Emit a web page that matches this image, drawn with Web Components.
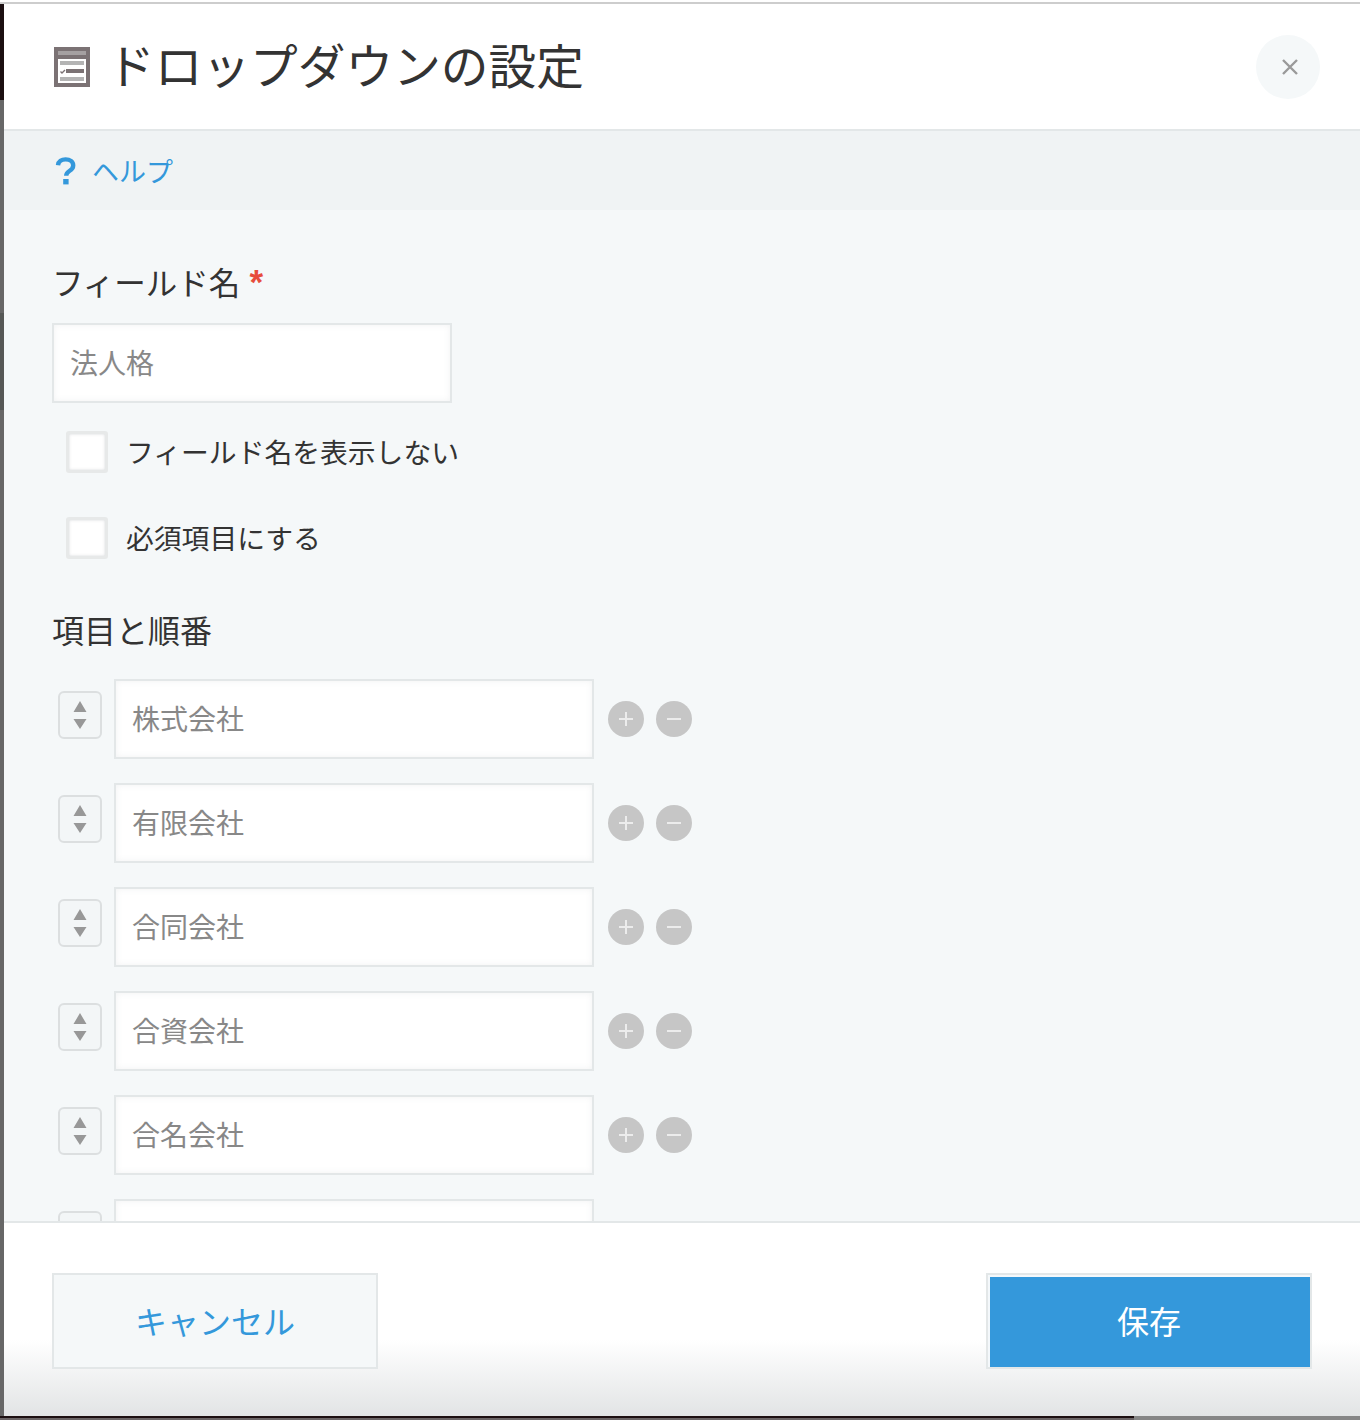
<!doctype html>
<html lang="ja">
<head>
<meta charset="utf-8">
<title>ドロップダウンの設定</title>
<style>
  html, body { margin: 0; height: 100%; background: #fff; }
  body { font-family: "Noto Sans CJK JP", "Liberation Sans", sans-serif; color: #333; overflow: hidden; }
</style>
</head>
<body>
<field-dialog>
  <span slot="title">ドロップダウンの設定</span>
  <span slot="help">ヘルプ</span>

  <field-label required style="--label-size: 31.500px">フィールド名</field-label>
  <text-box style="--box-width: 400px; margin-top: 20px">法人格</text-box>
  <check-row style="margin-top: 28px">フィールド名を表示しない</check-row>
  <check-row style="margin-top: 44px; --check-gap: 18px">必須項目にする</check-row>
  <field-label style="margin-top: 52px">項目と順番</field-label>
  <option-list>
    <option-row>株式会社</option-row>
    <option-row>有限会社</option-row>
    <option-row>合同会社</option-row>
    <option-row>合資会社</option-row>
    <option-row>合名会社</option-row>
    <option-row></option-row>
  </option-list>

  <dialog-button slot="cancel">キャンセル</dialog-button>
  <dialog-button slot="save" primary>保存</dialog-button>
</field-dialog>

<script>
function defineElement(tagName, html) {
  const template = document.createElement("template");
  template.innerHTML = html;
  customElements.define(tagName, class extends HTMLElement {
    constructor() {
      super();
      this.attachShadow({ mode: "open" }).append(template.content.cloneNode(true));
    }
  });
}

defineElement("form-icon", `
  <style>
    :host { display: block; width: 36px; height: 40px; }
    svg { display: block; }
  </style>
  <svg width="36" height="40" viewBox="0 0 36 40">
    <rect width="36" height="40" fill="#7b7274"/>
    <rect x="4" y="4" width="28" height="4" fill="#a5a0a1"/>
    <rect x="4" y="12" width="28" height="24" fill="#fff"/>
    <rect x="6" y="14" width="24" height="4" fill="#b4b4b4"/>
    <path d="M6.500 24.500l1.500 1.500 3-3" fill="none" stroke="#7b7274" stroke-width="1.400"/>
    <rect x="12" y="22" width="18" height="4" fill="#7b7274"/>
    <rect x="6" y="30" width="24" height="4" fill="#b4b4b4"/>
  </svg>
`);

defineElement("close-button", `
  <style>
    :host { display: flex; width: 64px; height: 64px; border-radius: 50%; background: #f5f8f9; align-items: center; justify-content: center; }
    svg { display: block; margin-left: 3px; }
  </style>
  <svg width="18" height="18" viewBox="0 0 18 18">
    <path d="M2 2l14 14M16 2L2 16" fill="none" stroke="#9a9a9a" stroke-width="2.400"/>
  </svg>
`);

defineElement("help-link", `
  <style>
    :host { display: flex; align-items: center; gap: 15px; color: #3498db; font-size: 27px; line-height: 40px; }
    svg { display: block; margin-left: -1px; }
  </style>
  <svg width="22" height="28" viewBox="0 0 22 28">
    <path d="M3 8.200C3.400 4.400 6.600 2.400 10.600 2.400c4.400 0 7.600 2.300 7.600 6 0 2.900-1.800 4.300-3.800 5.600-2.100 1.300-3.200 2.300-3.200 4.800" fill="none" stroke="#3498db" stroke-width="4.400"/>
    <rect x="8.200" y="22" width="5.400" height="5.400" fill="#3498db"/>
  </svg>
  <slot></slot>
`);

defineElement("field-label", `
  <style>
    :host {
      display: flex; box-sizing: border-box; gap: 9px; height: 40px; padding-bottom: 3px; align-items: center;
      font-size: var(--label-size, 32px); line-height: 37px; color: #333;
    }
    i { display: none; font: 700 35px/37px "Liberation Sans", sans-serif; color: #e74c3c; height: 37px; }
    :host([required]) i { display: block; }
  </style>
  <slot></slot><i>*</i>
`);

defineElement("text-box", `
  <style>
    :host {
      display: flex; box-sizing: border-box; align-items: center;
      width: var(--box-width, 480px); height: 80px; padding: 0 0 2px 16px;
      background: #fff; border: 2px solid #e3e7e8;
      box-shadow: inset 0 0 6px rgba(120, 130, 135, 0.1);
      color: #888; font-size: 28px; flex: none;
    }
  </style>
  <slot></slot>
`);

defineElement("check-row", `
  <style>
    :host { display: flex; align-items: center; gap: var(--check-gap, 18px); height: 42px; margin-left: 14px; font-size: 27.800px; color: #333; }
    b {
      display: block; box-sizing: border-box; width: 42px; height: 42px; background: #fff;
      border: 3px solid #e7e9e9; border-radius: 3px; box-shadow: inset 0 0 3px rgba(120, 130, 135, 0.3);
    }
    span { display: block; margin-bottom: 2px; }
  </style>
  <b></b><span><slot></slot></span>
`);

defineElement("sort-handle", `
  <style>
    :host {
      display: flex; box-sizing: border-box; width: 44px; height: 48px; flex: none;
      border: 2px solid #dcdfe0; border-radius: 6px; background: #f3f6f7;
      align-items: center; justify-content: center;
    }
    svg { display: block; }
  </style>
  <svg width="14" height="28" viewBox="0 0 14 28">
    <path d="M7 0l6.500 11H.5zM.5 18h13L7 28z" fill="#989898"/>
  </svg>
`);

defineElement("round-button", `
  <style>
    :host { display: flex; width: 36px; height: 36px; flex: none; border-radius: 50%; background: #c6c6c6; align-items: center; justify-content: center; }
    svg { display: block; }
    .plus { display: none; }
    :host([plus]) .plus { display: inline; }
  </style>
  <svg width="18" height="18" viewBox="0 0 18 18">
    <path d="M2 9h14" stroke="#ececec" stroke-width="2"/>
    <path class="plus" d="M9 2v14" stroke="#ececec" stroke-width="2"/>
  </svg>
`);

defineElement("option-row", `
  <style>
    :host { display: flex; align-items: center; margin-left: 6px; height: 80px; flex: none; }
    sort-handle { margin: -8px 12px 0 0; }
    .actions { display: flex; gap: 12px; margin-left: 14px; }
  </style>
  <sort-handle></sort-handle>
  <text-box><slot></slot></text-box>
  <div class="actions"><round-button plus></round-button><round-button></round-button></div>
`);

defineElement("option-list", `
  <style>
    :host { display: flex; flex-direction: column; gap: 24px; margin-top: 28px; }
  </style>
  <slot></slot>
`);

defineElement("dialog-button", `
  <style>
    :host {
      display: flex; box-sizing: border-box; width: 326px; height: 96px; padding-bottom: 2px;
      align-items: center; justify-content: center;
      background: #f5f8f9; border: 2px solid #e3e7e8;
      color: #3498db; font-size: 32px;
    }
    :host([primary]) {
      background: #3498db; color: #fff;
      box-shadow: inset 2px 2px 0 #f4f8fb;
    }
  </style>
  <slot></slot>
`);

defineElement("field-dialog", `
  <style>
    :host { display: grid; grid-template: 2px 2px 1412px 4px / 4px 1fr; width: 1360px; height: 1420px; overflow: hidden; }
    .top-line { grid-column: 1 / -1; grid-row: 2; background: #cdcdcd; }
    .left-strip {
      grid-column: 1; grid-row: 3;
      background: linear-gradient(#1c0f11 0 96px, #676767 96px 309px, #565856 309px 406px, #676767 406px);
    }
    .bottom-strip {
      grid-column: 1 / -1; grid-row: 4;
      background: linear-gradient(#1c0f11, #1c0f11) 0 0 / 1134px 2px no-repeat, linear-gradient(90deg, #6b6466 0 1134px, #868686 1134px);
    }
    .dialog { grid-column: 2; grid-row: 3; display: flex; flex-direction: column; min-height: 0; background: #fff; }
    header {
      display: flex; flex: none; box-sizing: border-box; height: 127px; align-items: center;
      padding: 0 40px 0 50px; border-bottom: 2px solid #e3e7e8;
    }
    .title { margin: 0 0 5px 17px; flex: 1; font-size: 47.700px; line-height: 60px; color: #333; }
    .help { flex: none; height: 79px; display: flex; align-items: center; padding-left: 52px; background: #f0f3f4; }
    .body { flex: 1; min-height: 0; overflow: hidden; padding: 53px 0 0 48px; background: #f5f8f9; }
    footer {
      display: flex; flex: none; box-sizing: border-box; height: 195px; justify-content: space-between;
      padding: 50px 48px 0; border-top: 2px solid #e3e7e8;
      background: linear-gradient(#fff 0 117px, #e2e4e5);
    }
  </style>
  <div class="top-line"></div>
  <div class="left-strip"></div>
  <div class="dialog">
    <header>
      <form-icon></form-icon>
      <div class="title"><slot name="title"></slot></div>
      <close-button></close-button>
    </header>
    <div class="help"><help-link><slot name="help"></slot></help-link></div>
    <div class="body"><slot></slot></div>
    <footer><slot name="cancel"></slot><slot name="save"></slot></footer>
  </div>
  <div class="bottom-strip"></div>
`);
</script>
</body>
</html>
